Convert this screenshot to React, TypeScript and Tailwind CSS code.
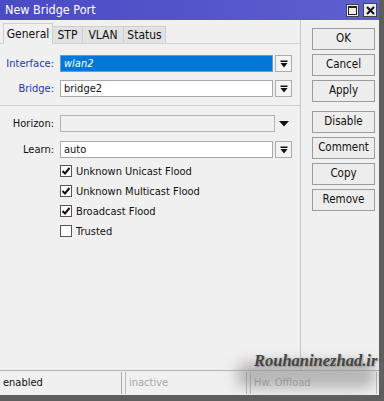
import React from "react";

const FONT = { fontFamily: '"DejaVu Sans Condensed", "Liberation Sans", Arial, sans-serif' };

function DropBtn() {
  return (
    <div className="w-[17px] h-[17px] ml-[2px] border border-[#adadad] bg-[#f4f4f4] flex items-center justify-center">
      <svg width="8" height="8" viewBox="0 0 8 8">
        <rect x="0.5" y="0.5" width="7" height="1.5" fill="#111" />
        <polygon points="0.5,3 7.5,3 4,7.5" fill="#111" />
      </svg>
    </div>
  );
}

function Row({
  label,
  blue,
  children,
  className,
}: {
  label: string;
  blue?: boolean;
  children: React.ReactNode;
  className?: string;
}) {
  return (
    <div className={"flex items-center h-[17px] " + (className ?? "")}>
      <div className={"w-[54px] text-right text-[11px] leading-none " + (blue ? "text-[#2536b4]" : "text-[#111]")}>
        {label}
      </div>
      <div className="ml-[6px] flex items-center">{children}</div>
    </div>
  );
}

function Check({ label, checked }: { label: string; checked: boolean }) {
  return (
    <div className="flex items-center h-[20px] pl-[60px]">
      <div className="w-[12px] h-[12px] border border-[#555] bg-white flex items-center justify-center">
        {checked && (
          <svg width="10" height="10" viewBox="0 0 10 10">
            <path d="M1.5 5 L4 7.5 L8.5 2" stroke="#111" strokeWidth="2" fill="none" />
          </svg>
        )}
      </div>
      <span className="ml-[4px] text-[11px] text-[#111] leading-none">{label}</span>
    </div>
  );
}

function Btn({ label, className }: { label: string; className?: string }) {
  return (
    <div
      className={
        "w-[63px] h-[22px] border border-[#9c9c9c] bg-[#ededed] flex items-center justify-center text-[11.5px] text-[#111] " +
        (className ?? "")
      }
    >
      {label}
    </div>
  );
}

export default function App() {
  return (
    <div className="w-[384px] h-[401px] flex flex-col bg-[#5d5d5d] overflow-hidden relative" style={FONT}>
      <div className="flex flex-row h-[395px]">
        <div className="w-[379px] h-[395px] flex flex-col bg-[#f0f0f0]">
          {/* title */}
          <div className="h-[20px] flex items-center bg-gradient-to-r from-[#4a4ac4] to-[#5f5fd0] pl-[5px] pr-[2px]">
            <span className="text-white text-[12.5px] leading-none">New Bridge Port</span>
            <div className="ml-auto flex items-center gap-[4px]">
              <div className="w-[13px] h-[13px] bg-[#ececec] border border-[#444] flex items-center justify-center">
                <div className="w-[9px] h-[9px] border border-[#222] border-t-2" />
              </div>
              <div className="w-[14px] h-[14px] bg-[#ececec] border border-[#444] flex items-center justify-center">
                <svg width="9" height="9" viewBox="0 0 9 9">
                  <path d="M1 1 L8 8 M8 1 L1 8" stroke="#111" strokeWidth="2" />
                </svg>
              </div>
            </div>
          </div>

          {/* body */}
          <div className="flex flex-row h-[350px]">
            <div className="w-[301px] border-r border-[#c6c6c6] flex flex-col">
              {/* tabs */}
              <div className="flex items-end pt-[3px] pl-[3px] h-[24px] border-b border-[#d4d4d4]">
                <div className="h-[21px] w-[50px] border border-b-0 border-[#cfcfcf] bg-[#f0f0f0] flex items-center justify-center text-[12px] text-[#111] -mb-px">
                  General
                </div>
                <div className="h-[17px] w-[30px] border border-l-0 border-b-0 border-[#cfcfcf] bg-[#e2e2e2] flex items-center justify-center text-[12px] text-[#111]">
                  STP
                </div>
                <div className="h-[17px] w-[41px] border border-l-0 border-b-0 border-[#cfcfcf] bg-[#e2e2e2] flex items-center justify-center text-[12px] text-[#111]">
                  VLAN
                </div>
                <div className="h-[17px] w-[42px] border border-l-0 border-b-0 border-[#cfcfcf] bg-[#e2e2e2] flex items-center justify-center text-[12px] text-[#111]">
                  Status
                </div>
              </div>

              <Row label="Interface:" blue className="mt-[11px]">
                <div className="w-[213px] h-[17px] bg-[#0078d7] border border-[#5aa0e0] flex items-center pl-[3px]">
                  <span className="text-white italic text-[11px] leading-none">wlan2</span>
                </div>
                <DropBtn />
              </Row>
              <Row label="Bridge:" blue className="mt-[8px]">
                <div className="w-[213px] h-[17px] bg-white border border-[#a9a9a9] flex items-center pl-[3px]">
                  <span className="text-[#111] text-[11px] leading-none">bridge2</span>
                </div>
                <DropBtn />
              </Row>

              <div className="mt-[8px] h-px bg-[#d0d0d0]" />

              <Row label="Horizon:" className="mt-[9px]">
                <div className="w-[215px] h-[17px] bg-[#f0f0f0] border border-[#b4b4b4]" />
                <div className="w-[17px] flex items-center justify-center">
                  <svg width="10" height="6" viewBox="0 0 10 6">
                    <polygon points="0,0 10,0 5,5.5" fill="#111" />
                  </svg>
                </div>
              </Row>
              <Row label="Learn:" className="mt-[9px]">
                <div className="w-[213px] h-[17px] bg-white border border-[#a9a9a9] flex items-center pl-[3px]">
                  <span className="text-[#111] text-[11px] leading-none">auto</span>
                </div>
                <DropBtn />
              </Row>

              <div className="mt-[3px] flex flex-col">
                <Check label="Unknown Unicast Flood" checked />
                <Check label="Unknown Multicast Flood" checked />
                <Check label="Broadcast Flood" checked />
                <Check label="Trusted" checked={false} />
              </div>
            </div>

            <div className="flex flex-col pl-[11px] pt-[8px] gap-[4px]">
              <Btn label="OK" className="border-[#6a6a6a]" />
              <Btn label="Cancel" />
              <Btn label="Apply" />
              <Btn label="Disable" className="mt-[5px]" />
              <Btn label="Comment" />
              <Btn label="Copy" />
              <Btn label="Remove" />
            </div>
          </div>

          {/* status bar */}
          <div className="h-[25px] border-t border-[#b4b4b4] flex flex-row gap-[3px] pt-px">
            <div className="w-[122px] h-[22px] border-r border-[#a9a9a9] flex items-center pl-[3px] text-[11px] text-[#111]">
              enabled
            </div>
            <div className="w-[122px] h-[22px] border-l border-r border-[#b9b9b9] flex items-center pl-[3px] text-[11px] text-[#a8a8a8]">
              inactive
            </div>
            <div className="w-[127px] h-[22px] border-l border-r border-[#b9b9b9] flex items-center pl-[3px] text-[11px] text-[#a8a8a8]">
              Hw. Offload
            </div>
          </div>
        </div>
        <div className="w-[5px] bg-[#5d5d5d]" />
      </div>

      {/* watermark */}
      <div className="absolute left-[236px] top-[362px] w-[140px] h-[26px] rounded-full bg-[#8e8e8e] opacity-60 blur-[7px]" />
      <div
        className="absolute left-[254px] top-[353px] text-[16.5px] font-bold italic text-[#454545] leading-none whitespace-nowrap"
        style={{ fontFamily: '"Liberation Serif", "DejaVu Serif", serif', textShadow: "1px 1px 2px rgba(0,0,0,0.3)" }}
      >
        Rouhaninezhad.ir
      </div>
    </div>
  );
}
